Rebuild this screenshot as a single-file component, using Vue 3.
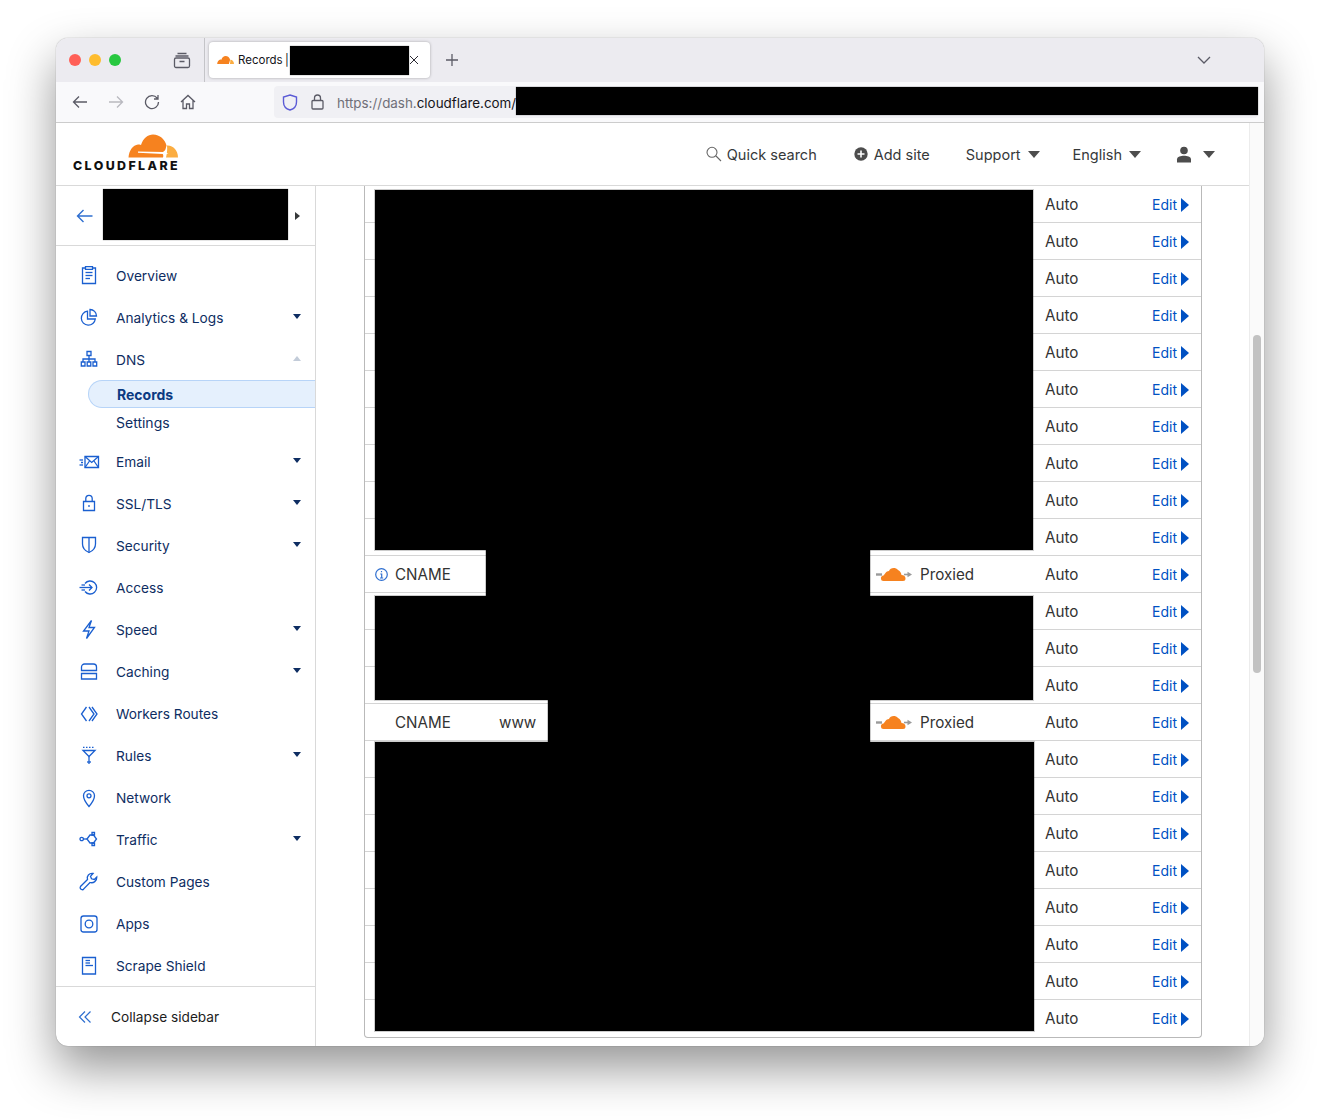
<template>
  <div class="screen">
    <div class="window">
      <div class="tabbar">
        <div class="lights">
          <span class="light light--red"></span>
          <span class="light light--yellow"></span>
          <span class="light light--green"></span>
        </div>
        <svg class="tabs-icon" width="18" height="18" viewBox="0 0 18 18">
          <path d="M4.5 2.5H13.5M2.5 5H15.5M1.5 8.5A1.5 1.5 0 0 1 3 7H15A1.5 1.5 0 0 1 16.5 8.5V15A1.5 1.5 0 0 1 15 16.5H3A1.5 1.5 0 0 1 1.5 15ZM6.5 10.5H11.5" />
        </svg>
        <div class="tab">
          <svg class="tab-fav" width="17" height="8" viewBox="0 0 50 23">
            <path fill="#f6821f" d="M0.5 23C1 16 5 10.5 10 10C11 10 12 10 13 10.5C15 4 20 0 25 0C32 0 37 5 38.5 11C37 17 36 20 35 23Z" />
            <path fill="#fbad41" d="M39 11C45 10.5 50 16 50 23H38C39 19 39.5 15 39 11Z" />
          </svg>
          <span class="tab-title">Records |</span>
          <span class="tab-mask"></span>
          <svg class="tab-close" width="10" height="10" viewBox="0 0 10 10"><path d="M1 1L9 9M9 1L1 9" /></svg>
        </div>
        <svg class="new-tab" width="12" height="12" viewBox="0 0 12 12"><path d="M6 0V12M0 6H12" /></svg>
        <svg class="tabs-chevron" width="14" height="8" viewBox="0 0 14 8"><path d="M1 1L7 7L13 1" /></svg>
      </div>

      <div class="toolbar">
        <div class="nav-btns">
          <svg width="16" height="14" viewBox="0 0 16 14"><path d="M15 7H1.5M7 1.5L1.5 7L7 12.5" /></svg>
          <svg class="nav-off" width="16" height="14" viewBox="0 0 16 14"><path d="M1 7H14.5M9 1.5L14.5 7L9 12.5" /></svg>
          <svg width="16" height="16" viewBox="0 0 16 16"><path d="M13.2 4.2A6.5 6.5 0 1 0 14.5 8M14 1V5H10" /></svg>
          <svg width="16" height="16" viewBox="0 0 16 16"><path d="M1 8L8 1.5L15 8M3 6.5V14.5H6.5V10H9.5V14.5H13V6.5" /></svg>
        </div>
        <div class="urlbar">
          <svg class="url-shield" width="16" height="17" viewBox="0 0 16 17"><path d="M8 1L14.5 3V8C14.5 12 11.5 15 8 16C4.5 15 1.5 12 1.5 8V3Z" /></svg>
          <svg class="url-lock" width="13" height="16" viewBox="0 0 13 16"><path d="M1 7.5A1 1 0 0 1 2 6.5H11A1 1 0 0 1 12 7.5V14A1 1 0 0 1 11 15H2A1 1 0 0 1 1 14ZM3.5 6.5V4A3 3 0 0 1 9.5 4V6.5" /></svg>
          <span class="url-text"><span class="url-dim">https://dash.</span>cloudflare.com/</span>
          <span class="url-mask"></span>
        </div>
      </div>

      <div class="page">
        <div class="main">
          <header class="header">
            <div class="logo">
              <svg class="logo-cloud" width="50" height="24" viewBox="0 0 50 23">
                <path fill="#f6821f" d="M0.5 23C1 16 5 10.5 10 10C11 10 12 10 13 10.5C15 4 20 0 25 0C32 0 37 5 38.5 11C37 17 36 20 35 23Z" />
                <path fill="#fbad41" d="M39 11C45 10.5 50 16 50 23H38C39 19 39.5 15 39 11Z" />
                <path fill="#fff" d="M10 17L35 17.4L38.5 14.5L37.5 18L40.5 19.3L37 19.5L36 22.5L34.8 19.6L10 18.2Z" />
              </svg>
              <span class="logo-word">CLOUDFLARE</span>
            </div>
            <nav class="head-nav">
              <a class="head-item head-item--search">
                <svg width="16" height="16" viewBox="0 0 16 16"><path class="line" d="M10 10L15 15M11 6.3A5 5 0 1 1 1 6.3A5 5 0 1 1 11 6.3Z" /></svg>
                Quick search
              </a>
              <a class="head-item head-item--add">
                <svg width="14" height="14" viewBox="0 0 14 14"><circle cx="7" cy="7" r="6.7" fill="#4d4d4d" /><path d="M7 3.5V10.5M3.5 7H10.5" stroke="#fff" stroke-width="1.6" /></svg>
                Add site
              </a>
              <a class="head-item head-item--support">Support <i class="tri"></i></a>
              <a class="head-item head-item--lang">English <i class="tri"></i></a>
              <a class="head-item head-item--user">
                <svg width="16" height="17" viewBox="0 0 16 17"><circle cx="8" cy="4.5" r="3.8" fill="#4d4d4d" /><path d="M1 16.5V13.5C1 10.5 5 9.8 8 9.8C11 9.8 15 10.5 15 13.5V16.5Z" fill="#4d4d4d" /></svg>
                <i class="tri tri--user"></i>
              </a>
            </nav>
          </header>

          <div class="body">
            <aside class="sidebar">
              <div class="zone">
                <svg class="zone-back" width="17" height="14" viewBox="0 0 17 14"><path d="M16.5 7H1.5M7.5 1L1.5 7L7.5 13" /></svg>
                <span class="zone-mask"></span>
                <i class="zone-caret"></i>
              </div>
              <ul class="menu">
                <template v-for="item in navItems" :key="item.label">
                  <li class="menu-row">
                    <svg class="menu-icon" width="20" height="20" viewBox="0 0 20 20">
                      <path v-for="d in item.icon" :key="d" :d="d" />
                    </svg>
                    <span class="menu-label">{{ item.label }}</span>
                    <i v-if="item.caret" class="menu-caret" :class="{ 'menu-caret--open': item.open }"></i>
                  </li>
                  <template v-if="item.open">
                    <li class="sub-row sub-row--active">Records</li>
                    <li class="sub-row sub-row--last">Settings</li>
                  </template>
                </template>
              </ul>
              <div class="collapse">
                <svg width="14" height="14" viewBox="0 0 14 14"><path d="M7 1.5L1.5 7L7 12.5M12.5 1.5L7 7L12.5 12.5" /></svg>
                <span>Collapse sidebar</span>
              </div>
            </aside>

            <main class="content">
              <div class="table">
                <div v-for="(row, i) in rows" :key="i" class="row">
                  <span class="cell-info">
                    <svg v-if="row.info" width="13" height="13" viewBox="0 0 13 13">
                      <circle cx="6.5" cy="6.5" r="5.8" />
                      <path d="M6.5 3V4.2M5.3 6H6.7V10M5 10H8.2" />
                    </svg>
                  </span>
                  <span class="cell-type">{{ row.type }}</span>
                  <span class="cell-name">{{ row.name }}</span>
                  <span class="cell-proxy">
                    <template v-if="row.proxied">
                      <svg width="36" height="14" viewBox="0 0 36 14">
                        <path d="M0 7.5H6" stroke="#9a9a9a" stroke-width="2.4" />
                        <path d="M28 7.5H32" stroke="#9a9a9a" stroke-width="1.6" />
                        <path d="M31.5 4.8L36 7.5L31.5 10.2Z" fill="#9a9a9a" />
                        <path fill="#f6821f" d="M5 11.5A2.5 2.5 0 0 1 7.5 8.5C9 7 10 4 13 4C14 1 19 -0.5 22 3C24.5 4 25 6 25.5 8C28 8 29.5 9.5 29.5 11.5A2.5 2.5 0 0 1 27 14H7.5A2.5 2.5 0 0 1 5 11.5Z" />
                      </svg>
                      <span>Proxied</span>
                    </template>
                  </span>
                  <span class="cell-ttl">Auto</span>
                  <a class="cell-edit">Edit <i class="edit-tri"></i></a>
                </div>
                <span class="mask mask--top"></span>
                <span class="mask mask--mid-a"></span>
                <span class="mask mask--mid"></span>
                <span class="mask mask--mid-b"></span>
                <span class="mask mask--bottom"></span>
              </div>
            </main>
          </div>
        </div>
        <div class="scrollbar"><span class="scroll-thumb"></span></div>
      </div>
    </div>
  </div>
</template>

<script setup>
const navItems = [
  { label: 'Overview', icon: ['M6.5 2H3.5V17.5H16.5V2H13.5', 'M6.5 0.7H13.5V3.3H6.5Z', 'M6.5 6.5H13.5', 'M6.5 9.5H13.5', 'M6.5 12.5H11'] },
  { label: 'Analytics & Logs', caret: true, icon: ['M8.5 3.2A7 7 0 1 0 16.3 11H8.5Z', 'M11 1.5A6.5 6.5 0 0 1 17.5 8H11Z'] },
  { label: 'DNS', caret: true, open: true, icon: ['M8 1.5H12V5.5H8Z', 'M10 5.5V12', 'M4 12V9H16V12', 'M2.3 12H6V16H2.3Z', 'M8.2 12H11.8V16H8.2Z', 'M14 12H17.7V16H14Z'] },
  { label: 'Email', caret: true, icon: ['M6 4.5H19.5V15.5H6Z', 'M6 4.5L12.7 10.5L19.5 4.5', 'M6 15.5L10.5 9', 'M19.5 15.5L15 9', 'M0.5 8H4', 'M2 10.5H4', 'M0.5 13H4'] },
  { label: 'SSL/TLS', caret: true, icon: ['M4.5 7.5H15.5V16.5H4.5Z', 'M6.8 7.5V4.5A3.2 3.2 0 0 1 13.2 4.5V7.5', 'M10 11V13'] },
  { label: 'Security', caret: true, icon: ['M3.5 1.5H16.5V8C16.5 12 13.5 15 10 16.5C6.5 15 3.5 12 3.5 8Z', 'M10 1.5V16.5'] },
  { label: 'Access', icon: ['M6 5.5A6.5 6.5 0 1 1 6 13.5', 'M0.5 9.5H13', 'M10 6.5L13 9.5L10 12.5', 'M2.5 7H6', 'M2.5 12H6'] },
  { label: 'Speed', caret: true, icon: ['M12.5 0.5L4.5 11H10L7.5 18.5L15.5 7.5H10Z'] },
  { label: 'Caching', caret: true, icon: ['M2.5 8.5V5A3 3 0 0 1 5.5 2H14.5A3 3 0 0 1 17.5 5V8.5Z', 'M2.5 11.5H17.5V17H2.5Z'] },
  { label: 'Workers Routes', icon: ['M7.5 3L2.5 10L7.5 17', 'M10 3L15 10L10 17', 'M13 3L18 10L13 17'] },
  { label: 'Rules', caret: true, icon: ['M4 1.3H5.5M7 1.3H8.5M10 1.3H11.5M13 1.3H14.5', 'M4 4.5H16L10 10.5Z', 'M10 10.5V18', 'M8 16H12'] },
  { label: 'Network', icon: ['M10 18.5C7 15 4.5 11.5 4.5 7.8A5.5 5.5 0 0 1 15.5 7.8C15.5 11.5 13 15 10 18.5Z', 'M10 5.8A2 2 0 1 1 10 9.8A2 2 0 1 1 10 5.8Z'] },
  { label: 'Traffic', caret: true, icon: ['M1 9A1.7 1.7 0 1 0 4.4 9A1.7 1.7 0 1 0 1 9Z', 'M4.4 9H8', 'M8 9L11 5H14.5L17.5 9L14.5 13H11Z', 'M13 2.5H15.5V5H13Z', 'M13 13H15.5V15.5H13Z'] },
  { label: 'Custom Pages', icon: ['M2.5 17.5A2 2 0 0 1 1.5 14.5L8.5 7.5C7.5 4 10 1 14 1.5L11.5 4.3L12.5 6.8L15.3 7.5L17.8 5C18 9 14.5 11.5 11 10.5L4.8 16.8A1.8 1.8 0 0 1 2.5 17.5Z'] },
  { label: 'Apps', icon: ['M4.5 2H15.5A2.5 2.5 0 0 1 18 4.5V15.5A2.5 2.5 0 0 1 15.5 18H4.5A2.5 2.5 0 0 1 2 15.5V4.5A2.5 2.5 0 0 1 4.5 2Z', 'M6.2 10A3.8 3.8 0 1 0 13.8 10A3.8 3.8 0 1 0 6.2 10Z'] },
  { label: 'Scrape Shield', icon: ['M3.5 1.5H16.5V18H3.5Z', 'M6.5 4.5H11', 'M6.5 7H11', 'M6.5 9.5H14'] }
]

const rows = Array.from({ length: 23 }, (_, i) => {
  if (i === 10) return { info: true, type: 'CNAME', name: '', proxied: true }
  if (i === 14) return { info: false, type: 'CNAME', name: 'www', proxied: true }
  return { info: false, type: '', name: '', proxied: false }
})
</script>

<style scoped>
.screen {
  height: 1120px;
  box-sizing: border-box;
  padding: 38px 56px 0;
  overflow: hidden;
}

.window {
  height: 1008px;
  border-radius: 12px;
  overflow: hidden;
  display: flex;
  flex-direction: column;
  background: #fff;
  font-family: Inter, "Liberation Sans", sans-serif;
  box-shadow: 0 0 1px rgba(0, 0, 0, 0.5), 0 22px 48px rgba(0, 0, 0, 0.42);
}

.tabbar {
  height: 44px;
  flex: none;
  display: flex;
  align-items: center;
  background: #ecebf0;
  padding-left: 13px;
}

.lights {
  display: flex;
  gap: 8px;
  width: 104px;
}

.light {
  width: 12px;
  height: 12px;
  border-radius: 50%;
}

.light--red { background: #ff5f57; }
.light--yellow { background: #febc2e; }
.light--green { background: #28c840; }

.tabs-icon {
  fill: none;
  stroke: #5b5b66;
  stroke-width: 1.3;
  margin-right: 13px;
}

.tab {
  height: 36px;
  width: 221px;
  margin-left: 5px;
  box-sizing: border-box;
  display: flex;
  align-items: center;
  background: #fff;
  border-radius: 4px;
  padding-left: 8px;
  box-shadow: 0 0 3px rgba(0, 0, 0, 0.3);
  position: relative;
  font-size: 11.5px;
  color: #15141a;
}

.tab::before {
  content: "";
  position: absolute;
  left: -5px;
  top: -4px;
  bottom: -4px;
  width: 1px;
  background: #c4c4c8;
}

.tab-fav {
  margin-right: 4px;
}

.tab-title {
  white-space: nowrap;
  width: 52px;
  word-spacing: -1px;
}

.tab-mask {
  width: 119px;
  height: 29px;
  background: #000;
  box-shadow: 0 0 1px #666;
}

.tab-close {
  fill: none;
  stroke: #2b2a33;
}

.new-tab {
  margin-left: 16px;
  fill: none;
  stroke: #5b5b66;
  stroke-width: 1.3;
}

.tabs-chevron {
  margin-left: auto;
  margin-right: 53px;
  fill: none;
  stroke: #5b5b66;
  stroke-width: 1.3;
}

.toolbar {
  height: 41px;
  flex: none;
  box-sizing: border-box;
  border-bottom: 1px solid #ccc;
  background: #f9f9fb;
  display: flex;
  align-items: center;
  padding-right: 6px;
}

.nav-btns {
  display: flex;
  align-items: center;
  gap: 20px;
  width: 218px;
  padding-left: 16px;
  box-sizing: border-box;
}

.nav-btns svg {
  fill: none;
  stroke: #5b5b66;
  stroke-width: 1.3;
}

.nav-btns .nav-off {
  stroke: #b9b9bf;
}

.urlbar {
  flex: 1;
  height: 32px;
  background: #f0f0f4;
  border-radius: 4px;
  display: flex;
  align-items: center;
  padding-left: 8px;
  font-size: 13.4px;
  color: #15141a;
}

.url-shield {
  fill: none;
  stroke: #5b5bd6;
  stroke-width: 1.4;
  margin-right: 13px;
}

.url-lock {
  fill: none;
  stroke: #5b5b66;
  stroke-width: 1.3;
  margin-right: 13px;
}

.url-text {
  white-space: nowrap;
  width: 179px;
  margin-top: 2px;
}

.url-dim {
  color: #6f6f78;
}

.url-mask {
  flex: 1;
  height: 28px;
  background: #000;
  box-shadow: 0 0 1px #666;
  margin-bottom: 3px;
}

.page {
  flex: 1;
  min-height: 0;
  display: flex;
}

.main {
  flex: 1;
  min-width: 0;
  display: flex;
  flex-direction: column;
}

.header {
  height: 63px;
  flex: none;
  box-sizing: border-box;
  border-bottom: 1px solid #d9d9d9;
  display: flex;
  align-items: center;
  padding: 0 34px 0 16px;
}

.logo {
  display: flex;
  flex-direction: column;
  align-items: flex-end;
  width: 108px;
  padding-bottom: 2px;
}

.logo-cloud {
  display: block;
  margin-right: 2px;
}

.logo-word {
  font-size: 12.4px;
  font-weight: 800;
  letter-spacing: 2.4px;
  line-height: 13px;
  color: #111;
  white-space: nowrap;
  align-self: flex-start;
  margin-top: 1px;
  margin-left: 1px;
}

.head-nav {
  margin-left: auto;
  display: flex;
  align-items: center;
  font-size: 14.5px;
  color: #36393a;
}

.head-item {
  display: flex;
  align-items: center;
  white-space: nowrap;
}

.head-item svg {
  flex: none;
}

.head-item .line {
  fill: none;
  stroke: #666;
  stroke-width: 1.1;
}

.head-item--search svg { margin-right: 5px; }
.head-item--add { margin-left: 37px; }
.head-item--add svg { margin-right: 6px; }
.head-item--support { margin-left: 36px; }
.head-item--lang { margin-left: 33px; }
.head-item--user { margin-left: 35px; }

.tri {
  width: 0;
  height: 0;
  margin-left: 7px;
  border-left: 6.5px solid transparent;
  border-right: 6.5px solid transparent;
  border-top: 7px solid #4d4d4d;
}

.tri--user {
  margin-left: 11px;
}

.body {
  flex: 1;
  min-height: 0;
  display: flex;
}

.sidebar {
  width: 260px;
  flex: none;
  box-sizing: border-box;
  border-right: 1px solid #d9d9d9;
  display: flex;
  flex-direction: column;
}

.zone {
  height: 60px;
  flex: none;
  box-sizing: border-box;
  border-bottom: 1px solid #d9d9d9;
  display: flex;
  align-items: center;
  padding-left: 20px;
}

.zone-back {
  fill: none;
  stroke: #2f6fd0;
  stroke-width: 1.4;
  margin-right: 10px;
}

.zone-mask {
  width: 185px;
  height: 51px;
  margin-bottom: 2px;
  background: #000;
  box-shadow: 0 0 1px #666;
}

.zone-caret {
  margin-left: 7px;
  width: 0;
  height: 0;
  border-top: 4.5px solid transparent;
  border-bottom: 4.5px solid transparent;
  border-left: 5px solid #36393a;
}

.menu {
  list-style: none;
  margin: 0;
  padding: 8px 0 0;
  flex: 1;
  font-size: 13.7px;
  color: #0e2d62;
}

.menu-row {
  height: 42px;
  display: flex;
  align-items: center;
  padding-left: 23px;
}

.menu-icon {
  flex: none;
  fill: none;
  stroke: #1a5fd0;
  stroke-width: 1.3;
  margin-right: 17px;
  margin-top: 2px;
  overflow: visible;
}

.menu-label {
  margin-top: 2px;
}

.menu-caret {
  margin-left: auto;
  margin-right: 14px;
  margin-bottom: 1px;
  width: 0;
  height: 0;
  border-left: 4.5px solid transparent;
  border-right: 4.5px solid transparent;
  border-top: 5px solid #0e2d62;
}

.menu-caret--open {
  border-top: 0;
  border-bottom: 5px solid #c3ccd9;
}

.sub-row {
  height: 28px;
  display: flex;
  align-items: center;
  padding-left: 60px;
  font-size: 14px;
}

.sub-row--active {
  margin-left: 32px;
  padding-left: 28px;
  box-sizing: border-box;
  background: #e5f0fd;
  border: 1px solid #b7d4f8;
  border-right: 0;
  border-radius: 14px 0 0 14px;
  font-weight: 700;
  color: #0b3a82;
}

.sub-row--last {
  margin-bottom: 4px;
}

.collapse {
  height: 60px;
  flex: none;
  box-sizing: border-box;
  border-top: 1px solid #d9d9d9;
  display: flex;
  align-items: center;
  padding-left: 22px;
  font-size: 13.7px;
  color: #1c1c1c;
}

.collapse svg {
  fill: none;
  stroke: #2f6fd0;
  stroke-width: 1.2;
  margin-right: 19px;
}

.content {
  flex: 1;
  min-width: 0;
  overflow: hidden;
  padding-left: 48px;
}

.table {
  position: relative;
  width: 838px;
  box-sizing: border-box;
  border: 1px solid #b9b9b9;
  border-top: 0;
  border-radius: 0 0 4px 4px;
  font-size: 15.2px;
  color: #333;
}

.row {
  height: 37px;
  box-sizing: border-box;
  border-bottom: 1px solid #d4d4d4;
  display: grid;
  grid-template-columns: 30px 105px 376px 169px 107px 1fr;
  align-items: center;
}

.row:last-of-type {
  border-bottom-color: transparent;
}

.cell-info {
  display: flex;
  padding-left: 10px;
}

.cell-info svg {
  fill: none;
  stroke: #2f6fd0;
  stroke-width: 1.2;
}

.cell-name {
  margin-left: -1px;
}

.cell-proxy {
  display: flex;
  align-items: center;
  gap: 8px;
}

.cell-edit {
  display: flex;
  align-items: center;
  margin-top: 1px;
  font-size: 14px;
  color: #0051c3;
}

.edit-tri {
  width: 0;
  height: 0;
  margin-left: 4px;
  border-top: 7px solid transparent;
  border-bottom: 7px solid transparent;
  border-left: 8px solid #0051c3;
}

.mask {
  position: absolute;
  background: #000;
  box-shadow: 0 0 0 1px rgba(0, 0, 0, 0.2);
}

.mask--top { left: 10px; top: 4px; width: 658px; height: 360px; }
.mask--mid-a { left: 121px; top: 364px; width: 384px; height: 46px; }
.mask--mid { left: 10px; top: 410px; width: 658px; height: 104px; }
.mask--mid-b { left: 183px; top: 514px; width: 322px; height: 42px; }
.mask--bottom { left: 10px; top: 556px; width: 659px; height: 289px; }

.scrollbar {
  width: 15px;
  flex: none;
  box-sizing: border-box;
  border-left: 1px solid #ececec;
  background: #fafafa;
  padding: 212px 0 0 3px;
}

.scroll-thumb {
  display: block;
  width: 8px;
  height: 338px;
  border-radius: 4px;
  background: #c2c2c2;
}
</style>

<style>
html,
body {
  background: #fff;
}
</style>
